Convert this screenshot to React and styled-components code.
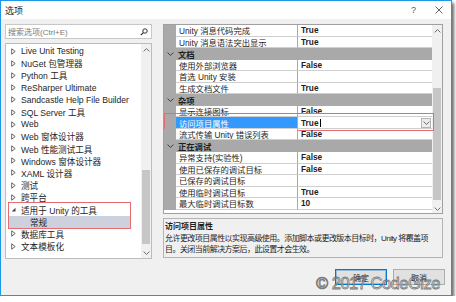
import React from 'react';
import styled, { createGlobalStyle } from 'styled-components';

const GlobalStyle = createGlobalStyle`
  html, body {
    margin: 0;
    padding: 0;
    background: #fff;
  }
  body {
    font-family: "Liberation Sans", "Noto Sans CJK SC", sans-serif;
    font-size: 8px;
    color: #1e1e1e;
  }
`;

const Dialog = styled.div`
  position: relative;
  width: 452px;
  height: 296px;
  box-sizing: border-box;
  border: 1px solid #1c97ea;
  background: #f0f0f0;
  box-shadow: 2px 3px 3px rgba(0, 0, 0, 0.6);
  display: flex;
  flex-direction: column;
`;

const TitleBar = styled.div`
  height: 18px;
  flex: none;
  background: #fff;
  display: flex;
  align-items: center;
  padding: 0 0 0 4px;
`;

const Title = styled.span`
  font-size: 9px;
  flex: 1;
`;

const TitleButton = styled.span`
  width: 25px;
  display: flex;
  justify-content: center;
  color: #555;
  font-size: 9px;
`;

const Body = styled.div`
  display: flex;
  gap: 11px;
  padding: 5px 0 0 4px;
`;

const LeftCol = styled.div`
  width: 147px;
  display: flex;
  flex-direction: column;
  gap: 4px;
`;

const RightCol = styled.div`
  width: 280px;
  display: flex;
  flex-direction: column;
  gap: 4px;
`;

const Search = styled.div`
  height: 15px;
  box-sizing: border-box;
  border: 1px solid #c8c8c8;
  background: #fff;
  display: flex;
  align-items: center;
  justify-content: space-between;
  padding: 0 3px 0 2px;
  color: #7a7a7a;
`;

const Tree = styled.div`
  height: 216px;
  box-sizing: border-box;
  border: 1px solid #bcbcbc;
  background: #fff;
  display: flex;
  font-size: 8.6px;
`;

const TreeList = styled.div`
  flex: 1;
  padding-top: 1px;
`;

const TreeRow = styled.div`
  height: 12.2px;
  display: flex;
  align-items: center;
  gap: 5px;
  padding-left: ${p => p.indent}px;
  white-space: nowrap;
  background: ${p => (p.selected ? '#cdd1de' : 'transparent')};
`;

const Group = styled.div`
  margin-left: 3px;
  width: 121px;
  outline: 1px solid #e46b6e;
`;

const Scrollbar = styled.div`
  width: 10px;
  flex: none;
  background: #f0f0f0;
  display: flex;
  flex-direction: column;
  align-items: center;
`;

const Arrow = styled.div`
  height: ${p => p.h}px;
  display: flex;
  align-items: center;
  justify-content: center;
  margin-top: ${p => (p.bottom ? 'auto' : '0')};
`;

const Thumb = styled.div`
  width: 8px;
  margin-top: ${p => p.top}px;
  height: ${p => p.h}px;
  background: #c6c6c6;
`;

const Grid = styled.div`
  height: 190px;
  box-sizing: border-box;
  border: 1px solid #a0a0a0;
  background: #fff;
  display: flex;
  font-size: 8.3px;
`;

const GridRows = styled.div`
  flex: 1;
  display: flex;
  flex-direction: column;
`;

const CategoryRow = styled.div`
  height: 11.56px;
  flex: none;
  display: flex;
  align-items: center;
  background: #a9a9a9;
  font-weight: bold;
`;

const Gutter = styled.div`
  width: 12px;
  align-self: stretch;
  flex: none;
  background: #a9a9a9;
  display: flex;
  align-items: center;
  justify-content: center;
`;

const CategoryLabel = styled.span`
  padding-left: 2px;
`;

const PropRow = styled.div`
  position: relative;
  height: 11.56px;
  flex: none;
  display: flex;

  ${p =>
    p.marked &&
    `
    &::after {
      content: '';
      position: absolute;
      left: 0;
      right: -2px;
      top: -4px;
      bottom: -2px;
      border: 1px solid #e46b6e;
      pointer-events: none;
    }
  `}
`;

const NameCell = styled.div`
  width: 122px;
  flex: none;
  box-sizing: border-box;
  padding-left: 3px;
  display: flex;
  align-items: center;
  white-space: nowrap;
  overflow: hidden;
  border-bottom: 1px solid #cfcfcf;
  border-right: 1px solid #a9a9a9;
  background: ${p => (p.selected ? '#3399ff' : '#fff')};
  color: ${p => (p.selected ? '#fff' : '#1e1e1e')};
`;

const ValueCell = styled.div`
  flex: 1;
  box-sizing: border-box;
  padding: 0 1px 0 3px;
  display: flex;
  align-items: center;
  font-weight: bold;
  border-bottom: 1px solid #cfcfcf;
`;

const Caret = styled.span`
  width: 1px;
  height: 8px;
  background: #000;
  margin-left: 1px;
`;

const DropButton = styled.span`
  margin-left: auto;
  width: 8px;
  height: 8px;
  border: 1px solid #b4b4b4;
  background: #ececec;
  display: flex;
  align-items: center;
  justify-content: center;
`;

const Desc = styled.div`
  height: 40px;
  box-sizing: border-box;
  border: 1px solid #b4b4b4;
  padding: 2px 1px 0 1px;
  line-height: 11.5px;
  white-space: nowrap;
  overflow: hidden;
`;

const DescTitle = styled.div`
  font-weight: bold;
`;

const DescLine = styled.div`
  letter-spacing: -0.55px;
`;

const Footer = styled.div`
  display: flex;
  justify-content: flex-end;
  gap: 6px;
  padding: 10px 6px 0 0;
`;

const Button = styled.div`
  width: 52px;
  height: 16px;
  box-sizing: border-box;
  border: 1px solid ${p => (p.primary ? '#0078d7' : '#adadad')};
  box-shadow: ${p => (p.primary ? 'inset 0 0 0 1px rgba(0,120,215,0.35)' : 'none')};
  background: #e1e1e1;
  display: flex;
  align-items: center;
  justify-content: center;
`;

const Watermark = styled.div`
  position: absolute;
  left: 315px;
  top: 273px;
  font-family: "Liberation Sans", sans-serif;
  font-size: 16.5px;
  letter-spacing: -0.5px;
  white-space: nowrap;
  color: rgba(236, 236, 236, 0.6);
  -webkit-text-stroke: 0.8px rgba(90, 90, 90, 0.8);
  pointer-events: none;
`;

const Collapsed = () => (
  <svg width="5" height="7" viewBox="0 0 5 7">
    <path d="M0.7 0.8 L4.2 3.5 L0.7 6.2 Z" fill="none" stroke="#555" strokeWidth="0.9" />
  </svg>
);

const Expanded = () => (
  <svg width="5" height="7" viewBox="0 0 5 7">
    <path d="M4.5 1.8 L4.5 5.6 L0.7 5.6 Z" fill="#444" />
  </svg>
);

const Chevron = ({ up, color = '#606060' }) => (
  <svg width="7" height="4" viewBox="0 0 7 4">
    <polyline
      points={up ? '0.6,3.4 3.5,0.6 6.4,3.4' : '0.6,0.6 3.5,3.4 6.4,0.6'}
      fill="none"
      stroke={color}
      strokeWidth="0.9"
    />
  </svg>
);

const SearchIcon = () => (
  <svg width="8" height="8" viewBox="0 0 8 8">
    <circle cx="5" cy="3" r="2.2" fill="none" stroke="#333" strokeWidth="1" />
    <line x1="3.4" y1="4.6" x2="0.8" y2="7.2" stroke="#333" strokeWidth="1.2" />
  </svg>
);

const CloseIcon = () => (
  <svg width="8" height="8" viewBox="0 0 8 8">
    <path d="M0.5 0.5 L7.5 7.5 M7.5 0.5 L0.5 7.5" stroke="#555" strokeWidth="0.9" />
  </svg>
);

const treeTop = [
  'Live Unit Testing',
  'NuGet 包管理器',
  'Python 工具',
  'ReSharper Ultimate',
  'Sandcastle Help File Builder',
  'SQL Server 工具',
  'Web',
  'Web 窗体设计器',
  'Web 性能测试工具',
  'Windows 窗体设计器',
  'XAML 设计器',
  '测试',
  '跨平台',
];

const treeBottom = ['数据库工具', '文本模板化'];

const gridRows = [
  { name: 'Unity 消息代码完成', value: 'True' },
  { name: 'Unity 消息语法突出显示', value: 'True' },
  { category: '文档' },
  { name: '使用外部浏览器', value: 'False' },
  { name: '首选 Unity 安装', value: '' },
  { name: '生成文档文件', value: 'True' },
  { category: '杂项' },
  { name: '显示连接图标', value: 'False' },
  { name: '访问项目属性', value: 'True', selected: true },
  { name: '流式传输 Unity 错误列表', value: 'False' },
  { category: '正在调试' },
  { name: '异常支持(实验性)', value: 'False' },
  { name: '使用已保存的调试目标', value: 'False' },
  { name: '已保存的调试目标', value: '' },
  { name: '使用临时调试目标', value: 'True' },
  { name: '最大临时调试目标数', value: '10' },
];

export default function App() {
  return (
    <>
      <GlobalStyle />
      <Dialog>
        <TitleBar>
          <Title>选项</Title>
          <TitleButton>?</TitleButton>
          <TitleButton>
            <CloseIcon />
          </TitleButton>
        </TitleBar>

        <Body>
          <LeftCol>
            <Search>
              <span>搜索选项(Ctrl+E)</span>
              <SearchIcon />
            </Search>
            <Tree>
              <TreeList>
                {treeTop.map(label => (
                  <TreeRow key={label} indent={5}>
                    <Collapsed />
                    <span>{label}</span>
                  </TreeRow>
                ))}
                <Group>
                  <TreeRow indent={2}>
                    <Expanded />
                    <span>适用于 Unity 的工具</span>
                  </TreeRow>
                  <TreeRow indent={21} selected>
                    <span>常规</span>
                  </TreeRow>
                </Group>
                {treeBottom.map(label => (
                  <TreeRow key={label} indent={5}>
                    <Collapsed />
                    <span>{label}</span>
                  </TreeRow>
                ))}
              </TreeList>
              <Scrollbar>
                <Arrow h={12}>
                  <Chevron up />
                </Arrow>
                <Thumb top={114} h={74} />
                <Arrow h={10} bottom>
                  <Chevron />
                </Arrow>
              </Scrollbar>
            </Tree>
          </LeftCol>

          <RightCol>
            <Grid>
              <GridRows>
                {gridRows.map((row, i) =>
                  row.category ? (
                    <CategoryRow key={i}>
                      <Gutter>
                        <Chevron color="#333" />
                      </Gutter>
                      <CategoryLabel>{row.category}</CategoryLabel>
                    </CategoryRow>
                  ) : (
                    <PropRow key={i} marked={row.selected}>
                      <Gutter />
                      <NameCell selected={row.selected}>{row.name}</NameCell>
                      <ValueCell>
                        {row.value}
                        {row.selected && (
                          <>
                            <Caret />
                            <DropButton>
                              <Chevron />
                            </DropButton>
                          </>
                        )}
                      </ValueCell>
                    </PropRow>
                  )
                )}
              </GridRows>
              <Scrollbar>
                <Arrow h={12}>
                  <Chevron up />
                </Arrow>
                <Thumb top={51} h={112} />
                <Arrow h={8} bottom>
                  <Chevron />
                </Arrow>
              </Scrollbar>
            </Grid>
            <Desc>
              <DescTitle>访问项目属性</DescTitle>
              <DescLine>允许更改项目属性以实现高级使用。添加脚本或更改版本目标时，Unity 将覆盖项</DescLine>
              <DescLine>目。关闭当前解决方案后，此设置才会生效。</DescLine>
            </Desc>
          </RightCol>
        </Body>

        <Footer>
          <Button primary>确定</Button>
          <Button>取消</Button>
        </Footer>

        <Watermark>© 2017 CodeGize</Watermark>
      </Dialog>
    </>
  );
}
